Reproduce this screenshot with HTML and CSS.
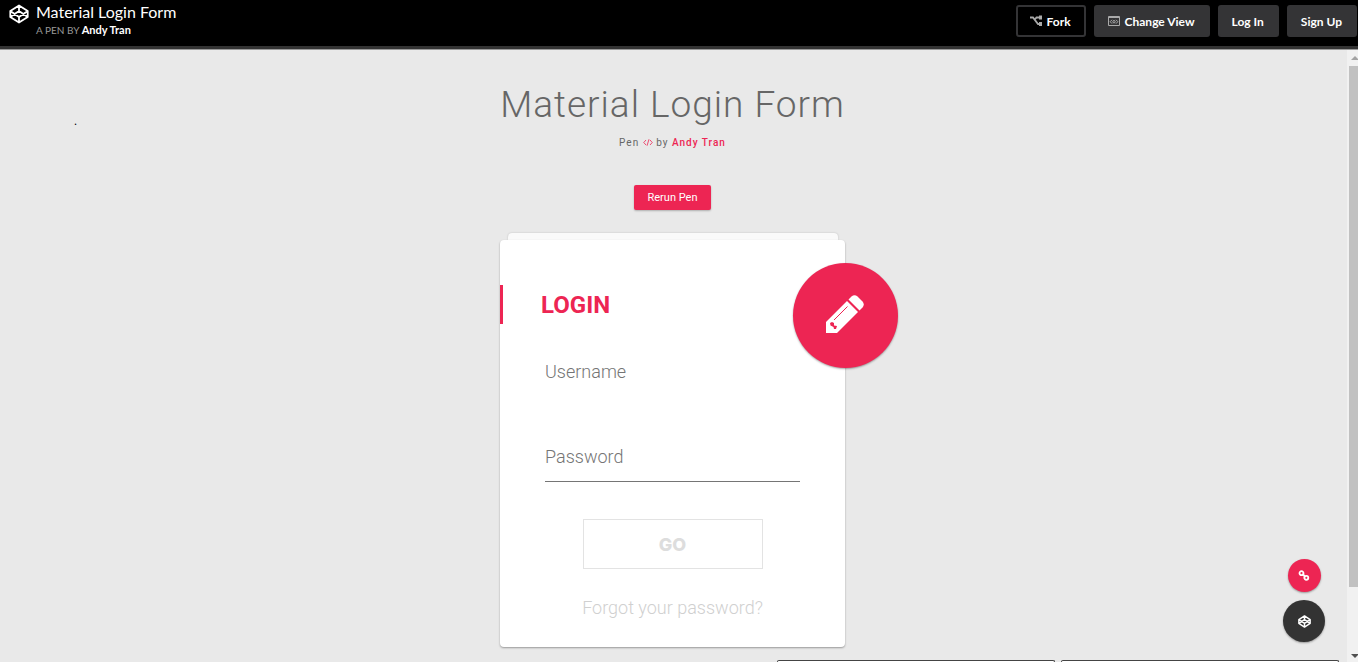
FILE: index.html
```html
<!DOCTYPE html>
<html lang="en">
<head>
    <meta charset="UTF-8">
    <meta name="viewport" content="width=device-width, initial-scale=1.0">
    <title>Material Login Form</title>
    <link rel="stylesheet" href="styles.css">
</head>
<body>
    <header class="top-bar">
        <svg class="logo" viewBox="0 0 20 20" width="20" height="20" fill="none" stroke="#fff" stroke-width="1.8" stroke-linejoin="round">
            <path d="M10 1.5 18.7 7v6L10 18.5 1.3 13V7ZM10 1.5V7M10 13v5.5M1.3 7l8.7 6 8.7-6M1.3 13 10 7l8.7 6"/>
        </svg>
        <div class="pen-info">
            <h1>Material Login Form</h1>
            <p><span>A PEN BY</span> <a href="#">Andy Tran</a></p>
        </div>
        <nav class="actions">
            <button class="btn btn-outline" type="button">
                <svg viewBox="0 0 12 12" width="12" height="12" fill="none" stroke="#aaa" stroke-width="1.8">
                    <path d="M0 2.500h3l5 6.500h2M4.500 5 6.500 2.500H10"/>
                    <path d="M9 .5h3v4H9zM9 7h3v4H9z" fill="#aaa" stroke="none"/>
                </svg>
                Fork
            </button>
            <button class="btn" type="button">
                <svg viewBox="0 0 12 12" width="12" height="12" fill="none" stroke="#aaa">
                    <path d="M.5 1.500h11v9H.5zM.5 2.500h11M4 4.800 2.200 6.700 4 8.600M8 4.800l1.800 1.900L8 8.600"/>
                    <circle cx="6" cy="6.700" r="1.200"/>
                </svg>
                Change View
            </button>
            <button class="btn" type="button">Log In</button>
            <button class="btn" type="button">Sign Up</button>
        </nav>
    </header>

    <div class="preview">
        <main class="page">
            <span class="dot">.</span>

            <div class="pen-title">
                <h2>Material Login Form</h2>
                <p>Pen
                    <svg viewBox="0 0 20 14" width="10" height="7" fill="none" stroke="#ed2553" stroke-width="1.6">
                        <path d="M6 2 1.500 7 6 12M14 2l4.500 5-4.500 5M12 .5 8 13.500"/>
                    </svg>
                    by <a href="#">Andy Tran</a></p>
            </div>

            <button class="rerun" type="button">Rerun Pen</button>

            <div class="container">
                <div class="card-back"></div>
                <form class="card">
                    <h3 class="title">Login</h3>
                    <div class="field">
                        <input type="text" id="username">
                        <label for="username">Username</label>
                    </div>
                    <div class="field field-line">
                        <input type="password" id="password">
                        <label for="password">Password</label>
                    </div>
                    <button class="go" type="button">GO</button>
                    <a class="forgot" href="#">Forgot your password?</a>
                </form>
                <button class="toggle" type="button" aria-label="Register">
                    <svg viewBox="0 0 38 38" width="38" height="38">
                        <path fill="#fff" d="M0 27 21 6 32 17 11 38H0Z"/>
                        <path fill="#fff" d="M22.500 4.500 25.500 1.500Q28.500 -1 31.500 1.500L36.500 6.500Q39 9.500 36.500 12.500L33.500 15.500Z"/>
                        <path fill="none" stroke="#ed2553" d="M8 25 21.500 11.500"/>
                        <path fill="#ed2553" d="M4 28 6 27l2 1v2.500l3 .5-1 3H8L7.500 32 4.500 30.500Z"/>
                    </svg>
                </button>
            </div>
        </main>
        <div class="scrollbar">
            <i class="arrow-up"></i>
            <i class="thumb"></i>
            <i class="arrow-down"></i>
        </div>

        <div class="floating">
            <a class="round round-link" href="#" aria-label="Portfolio">
                <svg viewBox="0 0 12 12" width="12" height="12" fill="none" stroke="#fff" stroke-width="1.8">
                    <circle cx="3.500" cy="3.200" r="2"/>
                    <circle cx="8.300" cy="7.800" r="2"/>
                    <path d="m4.500 4 3 3"/>
                </svg>
            </a>
            <a class="round round-pen" href="#" aria-label="CodePen">
                <svg viewBox="0 0 20 20" width="13" height="13" fill="none" stroke="#fff" stroke-width="2.200" stroke-linejoin="round">
                    <path d="M10 1.500 18.700 7v6L10 18.500 1.300 13V7ZM10 1.500V7M10 13v5.500M1.300 7l8.700 6 8.700-6M1.300 13 10 7l8.700 6"/>
                </svg>
            </a>
        </div>
        <div class="drawers">
            <div class="drawer"></div>
            <div class="drawer"></div>
        </div>
    </div>
</body>
</html>
```
FILE: styles.css
```css
* {
    box-sizing: border-box;
}
body {
    display: flex;
    flex-direction: column;
    height: 100vh;
    margin: 0;
    overflow: hidden;
    background: #e9e9e9;
    color: #666;
    font-family: Roboto, sans-serif;
}
h1, h2, h3, p {
    margin: 0;
}
a {
    text-decoration: none;
}
button {
    cursor: pointer;
}

/* top bar */
.top-bar {
    display: flex;
    align-items: flex-start;
    padding: 4px 1px 6px 9px;
    background: #000;
    border-bottom: 3px solid #333;
    box-shadow: 0 1px 0 #999;
    font-family: Lato, sans-serif;
    z-index: 1;
}
.pen-info {
    margin-left: 7px;
}
.pen-info h1 {
    color: #fff;
    font-size: 16px;
    line-height: 16px;
    font-weight: 400;
}
.pen-info p {
    color: #999;
    font-size: 10px;
    line-height: 20px;
}
.pen-info a {
    color: #fff;
    font-size: 11px;
    line-height: 11px;
    font-weight: 700;
}
.actions {
    display: flex;
    gap: 8px;
    margin-left: auto;
    padding-top: 1px;
}
.btn {
    display: flex;
    align-items: center;
    gap: 5px;
    height: 32px;
    padding: 0 13px 0 12px;
    background: #343436;
    border: 2px solid #343436;
    border-radius: 3px;
    color: #fff;
    font-family: Lato, sans-serif;
    font-size: 12px;
    font-weight: 700;
}
.btn-outline {
    background: #000;
}

/* preview */
.preview {
    position: relative;
    display: flex;
    flex: 1;
    min-height: 0;
}
.page {
    flex: 1;
    display: flex;
    flex-direction: column;
    align-items: center;
    padding: 33px 0 0;
}
.dot {
    position: absolute;
    left: 74px;
    top: 65px;
    color: #000;
    font-size: 12px;
    line-height: 14px;
}
.pen-title {
    text-align: center;
    letter-spacing: 1px;
}
.pen-title h2 {
    font-size: 37px;
    line-height: 46px;
    font-weight: 300;
}
.pen-title p {
    margin-top: 8px;
    font-size: 10px;
    line-height: 14px;
}
.pen-title a {
    color: #ed2553;
    font-weight: 500;
}
.rerun {
    height: 25px;
    margin-top: 35px;
    padding: 0 14px;
    background: #ed2553;
    border: 0;
    border-radius: 2px;
    box-shadow: 0 1px 2px rgba(0,0,0,0.25);
    color: #fff;
    font-family: Roboto, sans-serif;
    font-size: 11px;
}

/* card */
.container {
    position: relative;
    width: 345px;
    margin-top: 23px;
}
.card-back {
    height: 7px;
    margin: 0 7px 0 8px;
    background: #fafafa;
    border-radius: 4px 4px 0 0;
    box-shadow: 0 0 2px rgba(0,0,0,0.2);
}
.card {
    position: relative;
    display: flex;
    flex-direction: column;
    padding: 45px 0 28px;
    background: #fff;
    border-radius: 4px;
    box-shadow: 0 1px 2px rgba(0,0,0,0.35);
}
.title {
    margin-bottom: 28px;
    padding: 2px 0 0 38px;
    border-left: 3px solid #ed2553;
    color: #ed2553;
    font-size: 24px;
    line-height: 37px;
    font-weight: 700;
    text-transform: uppercase;
}
.field {
    position: relative;
    height: 45px;
    margin: 0 45px 40px;
    border-bottom: 1px solid transparent;
}
.field-line {
    margin-bottom: 37px;
    border-color: #757575;
}
.field input {
    width: 100%;
    height: 44px;
    padding: 0;
    background: none;
    border: 0;
    outline: 0;
    font-size: 18px;
}
.field label {
    position: absolute;
    left: 0;
    top: 0;
    color: #757575;
    font-size: 18px;
    line-height: 40px;
    font-weight: 300;
}
.go {
    align-self: center;
    width: 180px;
    height: 50px;
    background: #fff;
    border: 1px solid #e3e3e3;
    color: #ddd;
    font-family: Inter, sans-serif;
    font-size: 18px;
    font-weight: 800;
}
.forgot {
    margin-top: 28px;
    color: #d0d0d0;
    font-size: 18px;
    line-height: 22px;
    font-weight: 300;
    text-align: center;
}
.toggle {
    position: absolute;
    right: -53px;
    top: 30px;
    display: flex;
    align-items: center;
    justify-content: center;
    width: 105px;
    height: 105px;
    padding: 0 1px 3px 0;
    background: #ed2553;
    border: 0;
    border-radius: 50%;
    box-shadow: 0 1px 2px rgba(0,0,0,0.35);
}

/* scrollbar */
.scrollbar {
    display: flex;
    flex-direction: column;
    align-items: flex-end;
    width: 13px;
    background: #f1f1f1;
    border-left: 2px solid #e9e9e9;
    overflow: hidden;
}
.arrow-up, .arrow-down {
    border: 4px solid transparent;
    border-top-width: 0;
    border-bottom: 4px solid #a3a3a3;
    margin: 7px -1px 0 0;
}
.arrow-down {
    margin: auto -1px 4px 0;
    border-top: 4px solid #505050;
    border-bottom-width: 0;
}
.thumb {
    flex: 0 0 85%;
    width: 9px;
    margin-top: 6px;
    background: #c1c1c1;
}

/* floating links */
.floating {
    position: absolute;
    right: 33px;
    bottom: 20px;
    display: flex;
    flex-direction: column;
    align-items: center;
    gap: 8px;
}
.round {
    display: flex;
    align-items: center;
    justify-content: center;
    border-radius: 50%;
    box-shadow: 0 1px 2px rgba(0,0,0,0.35);
}
.round-link {
    width: 33px;
    height: 33px;
    background: #ed2553;
}
.round-pen {
    width: 42px;
    height: 42px;
    background: #333;
}

/* closed drawers at the bottom edge */
.drawers {
    position: absolute;
    right: 19px;
    bottom: 0;
    display: flex;
    gap: 6px;
}
.drawer {
    width: 278px;
    height: 2px;
    background: #fff;
    border: 1px solid #444;
    border-bottom: 0;
    border-radius: 2px 2px 0 0;
}
```
